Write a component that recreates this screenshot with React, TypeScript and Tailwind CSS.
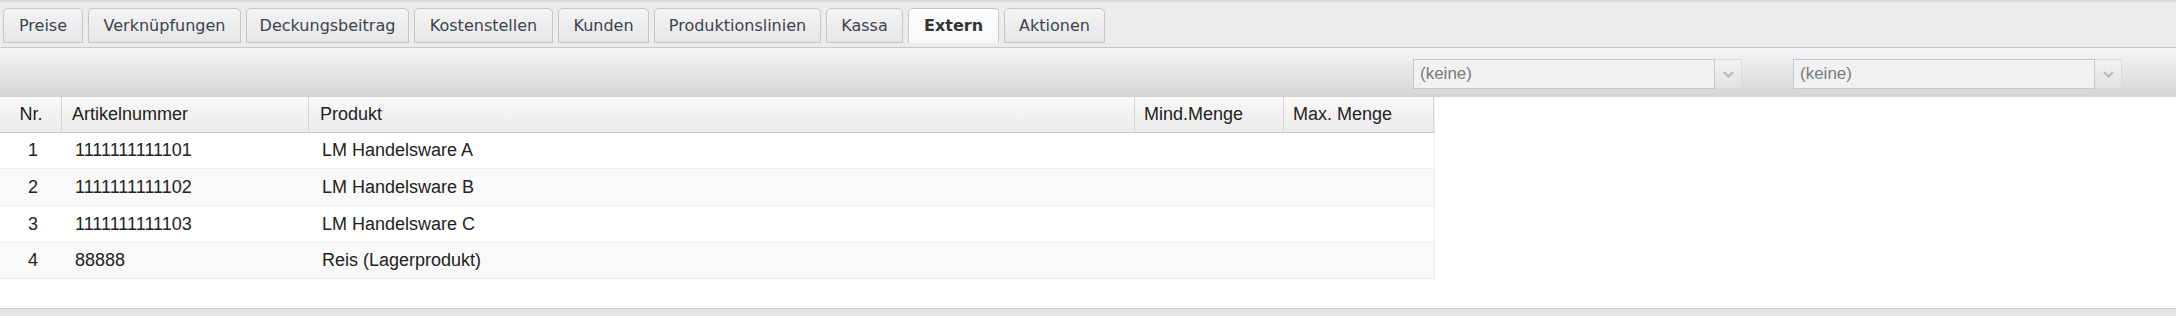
const tabs = [
  { label: 'Preise', w: 'w-[80px]' },
  { label: 'Verknüpfungen', w: 'w-[153px]' },
  { label: 'Deckungsbeitrag', w: 'w-[163px]' },
  { label: 'Kostenstellen', w: 'w-[139px]' },
  { label: 'Kunden', w: 'w-[91px]' },
  { label: 'Produktionslinien', w: 'w-[167px]' },
  { label: 'Kassa', w: 'w-[77px]' },
  { label: 'Extern', w: 'w-[91px]', active: true },
  { label: 'Aktionen', w: 'w-[101px]' },
]

const rows = [
  { nr: 1, art: '1111111111101', prod: 'LM Handelsware A', cls: 'h-[36px] bg-white' },
  { nr: 2, art: '1111111111102', prod: 'LM Handelsware B', cls: 'h-[37px] bg-[#f9f9f9]' },
  { nr: 3, art: '1111111111103', prod: 'LM Handelsware C', cls: 'h-[37px] bg-white' },
  { nr: 4, art: '88888', prod: 'Reis (Lagerprodukt)', cls: 'h-[36px] bg-[#f9f9f9]' },
]

function Combo() {
  return (
    <div className="flex h-[30px]">
      <div className="flex w-[302px] items-center border border-[#c3c6d4] bg-[#f1f1f1] pl-[6px] text-[17px] text-[#7a7a7a]">
        (keine)
      </div>
      <div className="flex w-[27px] items-center justify-center border border-l-0 border-[#dadada] bg-gradient-to-b from-[#f2f2f2] to-[#e2e2e2]">
        <svg width="11" height="7" viewBox="0 0 11 7" fill="none">
          <path d="M1 1l4.5 4.5L10 1" stroke="#b8b8b8" strokeWidth="2.2" />
        </svg>
      </div>
    </div>
  )
}

export default function App() {
  return (
    <div className="flex h-[316px] w-[2176px] flex-col bg-white font-['Liberation_Sans',Arial,sans-serif] text-[#222]">
      {/* tab strip */}
      <div className="h-[47px] border-t-2 border-[#dcdcdc] bg-[#ececec] pt-[6px] pl-[3px]">
        <div className="flex gap-[5px]">
          {tabs.map((t) => (
            <div
              key={t.label}
              className={
                t.active
                  ? `${t.w} flex h-[35px] items-center justify-center rounded-t-[5px] border border-b-0 border-[#c6c6c6] bg-gradient-to-b from-[#ffffff] to-[#f7f7f7] font-['DejaVu_Sans',sans-serif] text-[16px] font-bold text-[#333]`
                  : `${t.w} flex h-[35px] items-center justify-center rounded-t-[5px] border border-[#c6c6c6] bg-gradient-to-b from-[#f4f4f4] to-[#e6e6e6] font-['DejaVu_Sans',sans-serif] text-[16px] text-[#3b4350]`
              }
            >
              {t.label}
            </div>
          ))}
        </div>
      </div>
      <div className="h-[1px] bg-[#c9c9c9]" />
      <div className="h-[3px] bg-[#f6f6f6]" />

      {/* toolbar */}
      <div className="flex h-[46px] items-center justify-end gap-[51px] bg-gradient-to-b from-[#f3f3f3] to-[#d5d5d5] pr-[54px]">
        <Combo />
        <Combo />
      </div>

      {/* grid */}
      <div className="w-[1435px] text-[18px]">
        <div className="flex h-[36px] border-b border-[#cdcdcd] bg-gradient-to-b from-[#f9f9f9] to-[#ebebeb]">
          <div className="flex w-[62px] items-center justify-center border-r border-[#d3d3d3] pl-[1px]">Nr.</div>
          <div className="flex w-[247px] items-center border-r border-[#d3d3d3] pl-[10px]">Artikelnummer</div>
          <div className="flex w-[826px] items-center border-r border-[#d3d3d3] pl-[11px]">Produkt</div>
          <div className="flex w-[149px] items-center border-r border-[#d3d3d3] pl-[9px]">Mind.Menge</div>
          <div className="flex w-[150px] items-center border-r border-[#d3d3d3] pl-[9px]">Max. Menge</div>
        </div>
        {rows.map((r) => (
          <div key={r.nr} className={`flex border-b border-r border-[#ececec] ${r.cls}`}>
            <div className="flex w-[62px] items-center justify-center pl-[4px]">{r.nr}</div>
            <div className="flex w-[247px] items-center pl-[13px]">{r.art}</div>
            <div className="flex w-[826px] items-center pl-[13px]">{r.prod}</div>
            <div className="w-[149px]" />
            <div className="w-[150px]" />
          </div>
        ))}
      </div>

      <div className="flex-1" />
      <div className="h-[1px] bg-[#cacaca]" />
      <div className="h-[7px] bg-[#e6e6e6]" />
    </div>
  )
}
